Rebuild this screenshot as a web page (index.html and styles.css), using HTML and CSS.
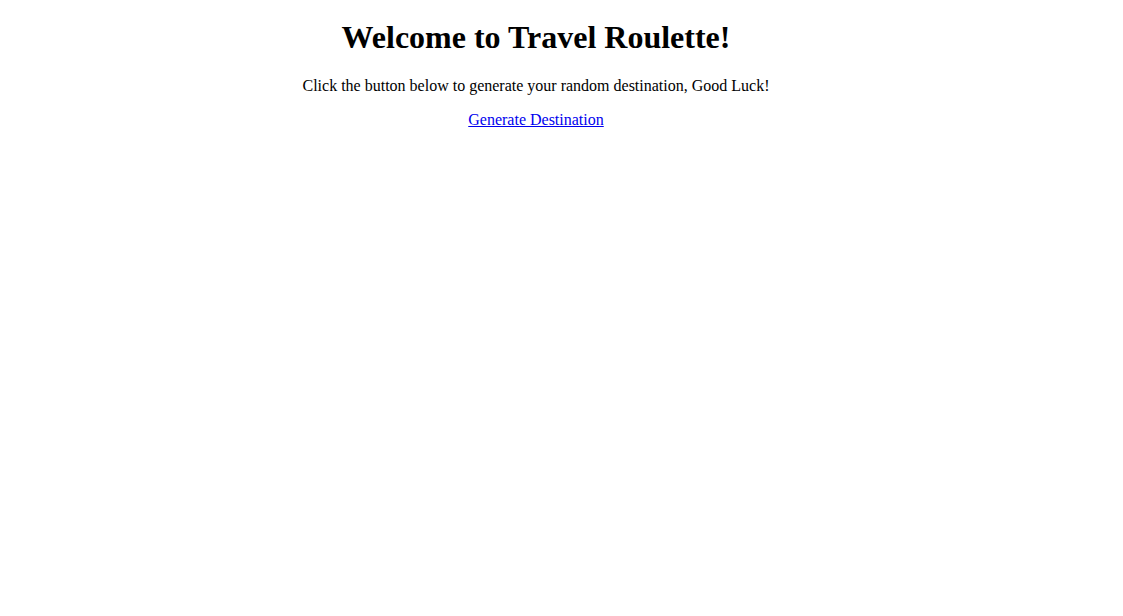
FILE: index.html
```html
<!DOCTYPE html>
<html>
<head>
<meta charset="utf-8">
<title>Travel Roulette</title>
<link rel="stylesheet" href="styles.css">
</head>
<body>
<main class="page">
  <h1 class="title">Welcome to Travel Roulette!</h1>
  <p class="intro">Click the button below to generate your random destination, Good Luck!</p>
  <a class="generate" href="#">Generate Destination</a>
</main>
</body>
</html>
```
FILE: styles.css
```css
body {
  margin: 0 8px 8px;
  font-family: "Liberation Serif", "Times New Roman", serif;
  font-size: 16px;
  color: #000;
  background: #fff;
}
.page {
  width: 1056px;
  text-align: center;
  padding-top: 18.5px;
}
.title {
  font-size: 32px;
  font-weight: bold;
  margin: 0 0 21.44px;
}
.intro {
  margin: 16px 0;
}
.generate {
  color: #0000ee;
  text-decoration: underline;
}
```
